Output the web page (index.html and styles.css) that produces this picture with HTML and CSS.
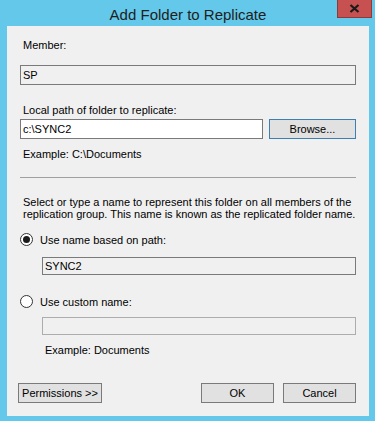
FILE: index.html
```html
<!DOCTYPE html>
<html>
<head>
<meta charset="utf-8">
<link rel="stylesheet" href="styles.css">
</head>
<body>
<div class="window">
  <div class="titlebar">
    <span class="title">Add Folder to Replicate</span>
    <div class="close">
      <svg width="11" height="9" viewBox="0 0 11 9"><path d="M1.5 1 L9.5 8 M9.5 1 L1.5 8" stroke="#1a1a1a" stroke-width="2.2" fill="none"/></svg>
    </div>
  </div>
  <div class="client">
    <div class="label">Member:</div>
    <div class="box readonly tall">SP</div>

    <div class="label m-local">Local path of folder to replicate:</div>
    <div class="path-row">
      <div class="box input">c:\SYNC2</div>
      <div class="btn browse">Browse...</div>
    </div>
    <div class="label m-example">Example: C:\Documents</div>

    <div class="separator"></div>

    <p class="desc">Select or type a name to represent this folder on all members of the replication group. This name is known as the replicated folder name.</p>

    <div class="radio-row r1">
      <span class="radio checked"></span>
      <span class="radio-label">Use name based on path:</span>
    </div>
    <div class="box readonly indent b-sync">SYNC2</div>

    <div class="radio-row r2">
      <span class="radio"></span>
      <span class="radio-label">Use custom name:</span>
    </div>
    <div class="box disabled indent b-custom"></div>
    <div class="label example2">Example: Documents</div>

    <div class="buttons">
      <div class="btn perm">Permissions &gt;&gt;</div>
      <div class="spacer"></div>
      <div class="btn ok">OK</div>
      <div class="btn cancel">Cancel</div>
    </div>
  </div>
</div>
</body>
</html>
```

FILE: styles.css
```css
* { box-sizing: border-box; }
html, body { margin: 0; padding: 0; }
body {
  background: #63c8ea;
  font-family: "Liberation Sans", Arial, sans-serif;
  font-size: 11px;
  color: #000;
}
.window {
  width: 375px;
  height: 421px;
  background: #63c8ea;
  display: flex;
  flex-direction: column;
}
.titlebar {
  height: 26px;
  position: relative;
  display: flex;
  align-items: center;
  justify-content: center;
}
.title {
  font-size: 15px;
  color: #1e1e1e;
  margin-top: 2px;
  margin-left: 1px;
}
.close {
  position: absolute;
  left: 337px;
  top: 0;
  width: 35px;
  height: 18px;
  background: #c75050;
  border: 1px solid #8c3b3b;
  border-top: none;
  display: flex;
  align-items: center;
  justify-content: center;
}
.client {
  margin: 0 6px 0 7px;
  height: 390px;
  background: #f0f0f0;
  padding: 12px 13px 0 13px;
  display: flex;
  flex-direction: column;
}
.label {
  line-height: 15px;
  padding-left: 3px;
  white-space: nowrap;
}
.box {
  height: 20px;
  border: 1px solid #7a7a7a;
  background: #f0f0f0;
  padding-left: 2px;
  line-height: 18px;
  white-space: nowrap;
}
.box.tall { margin-top: 12px; }
.m-local { margin-top: 18px; }
.path-row {
  margin-top: 1px;
  display: flex;
  gap: 6px;
}
.box.input {
  width: 243px;
  background: #fff;
}
.btn {
  height: 20px;
  background: #e1e1e1;
  border: 1px solid #7a7a7a;
  display: flex;
  align-items: center;
  justify-content: center;
  white-space: nowrap;
}
.browse {
  width: 87px;
  border-color: #3c7fb1;
}
.m-example { margin-top: 8px; }
.separator {
  margin-top: 15px;
  height: 1px;
  background: #a0a0a0;
}
.desc {
  margin: 18px 0 0 0;
  padding-left: 3px;
  line-height: 12px;
}
.radio-row {
  display: flex;
  align-items: center;
  height: 15px;
}
.r1 { margin-top: 12px; }
.r2 { margin-top: 19px; }
.radio {
  width: 13px;
  height: 13px;
  border-radius: 50%;
  border: 1px solid #333;
  background: #fff;
  display: flex;
  align-items: center;
  justify-content: center;
}
.radio.checked::after {
  content: "";
  width: 7px;
  height: 7px;
  border-radius: 50%;
  background: #1a1a1a;
}
.radio-label { margin-left: 7px; }
.box.indent {
  margin-left: 22px;
  height: 18px;
  line-height: 16px;
}
.b-sync { margin-top: 10px; }
.b-custom {
  margin-top: 8px;
  border-color: #adadad;
}
.example2 {
  margin-top: 8px;
  padding-left: 25px;
}
.buttons {
  margin-top: 25px;
  display: flex;
  gap: 9px;
}
.perm {
  width: 84px;
  margin-left: -2px;
}
.spacer { flex: 1; }
.ok, .cancel { width: 73px; }
```
